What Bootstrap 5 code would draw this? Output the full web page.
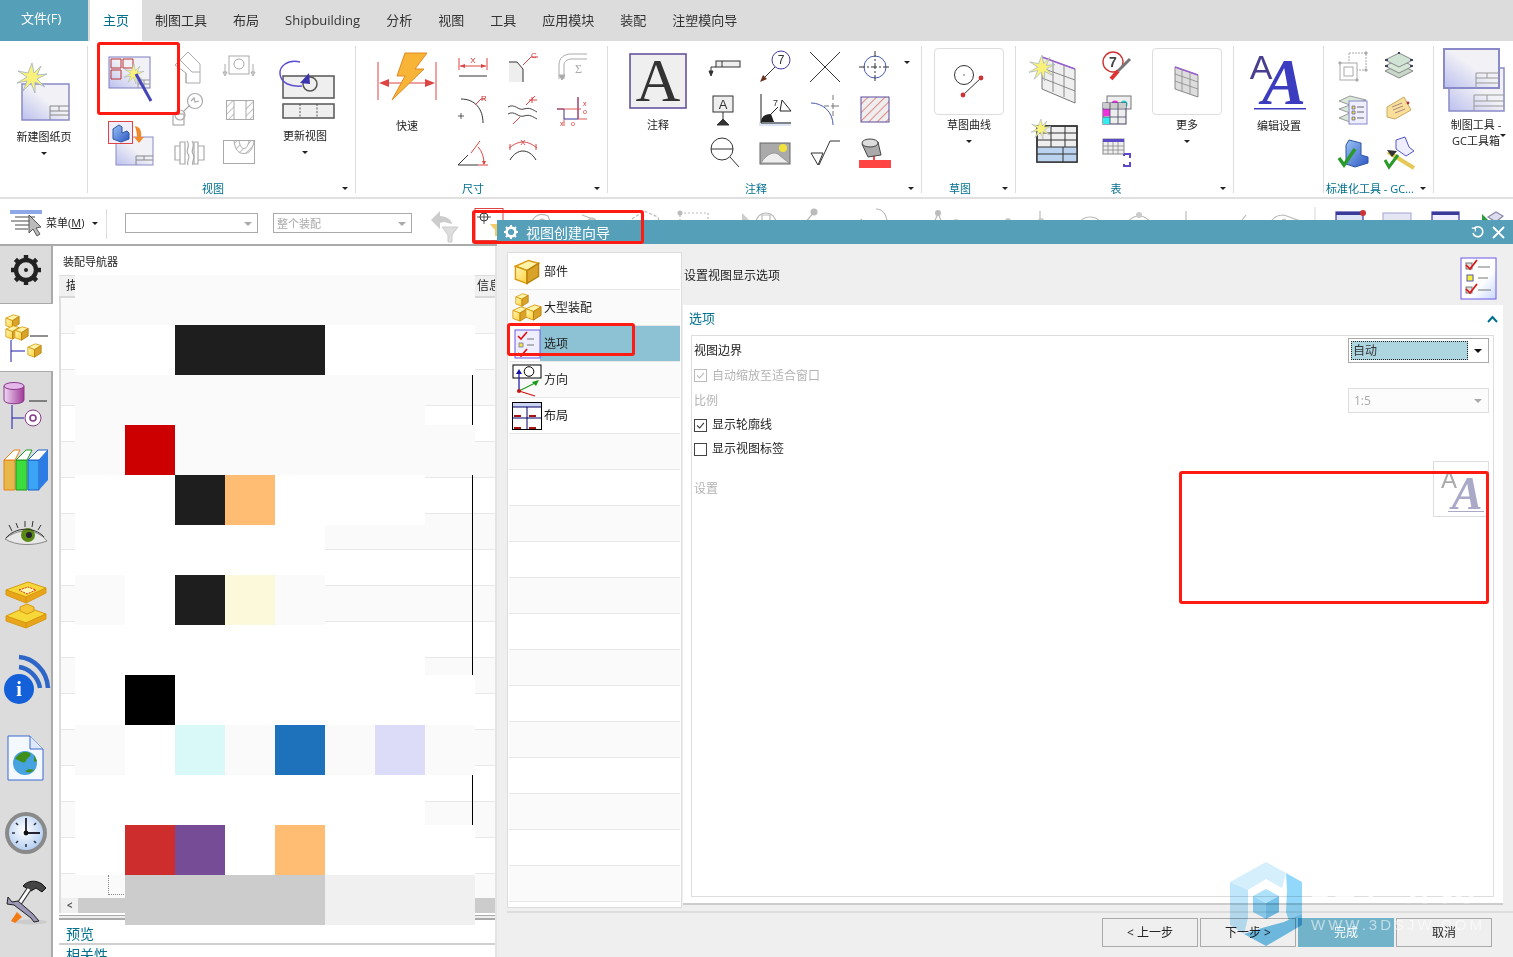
<!DOCTYPE html>
<html lang="zh-CN">

<head>
  <meta charset="UTF-8">
  <meta name="viewport" content="width=device-width, initial-scale=1.0">
  <title>视图创建向导</title>
  <link href="https://cdn.jsdelivr.net/npm/bootstrap@5.3.0/dist/css/bootstrap.min.css" rel="stylesheet">
  <style>
    html, body { height: 100%; overflow: hidden; }
    body {
      background: #fff;
      color: #222;
      font-family: "Open Sans", "Noto Sans CJK SC", sans-serif;
      font-size: 12px;
    }
    svg { display: block; flex: none; overflow: visible; }

    .app-root { position: relative; width: 1513px; height: 957px; overflow: hidden; }
    .main-row { min-height: 0; }

    /* small spacing helpers for the pixel values bootstrap has no step for */
    .mtx-2 { margin-top: 2px; } .mtx-6 { margin-top: 6px; } .mtx-7 { margin-top: 7px; } .mtx-10 { margin-top: 10px; }
    .mtx-11 { margin-top: 11px; } .mtx-15 { margin-top: 15px; } .mtx-16 { margin-top: 16px; } .mtx-18 { margin-top: 18px; }

    /* tabs */
    .tab-strip { height: 41px; background: #dcdcdc; }
    .tab-file { width: 88px; background: #559fb9; color: #fff; font-size: 13px; padding-left: 21px; line-height: 37px; margin-right: 2px; }
    .tab-item { padding: 0 13px; font-size: 13px; line-height: 41px; color: #333; }
    .tab-item.is-on { background: #fff; color: #00708f; }

    /* ribbon */
    .rb-bar { height: 158px; border-bottom: 2px solid #e0e0e0; }
    .rb-group { position: relative; }
    .rb-group::after { content: ""; position: absolute; right: 0; top: 5px; bottom: 4px; width: 1px; background: #ddd; }
    .g-88 { width: 88px; } .g-268 { width: 268px; } .g-252 { width: 252px; } .g-314 { width: 314px; }
    .g-94 { width: 94px; } .g-218 { width: 218px; } .g-90 { width: 90px; } .g-110 { width: 110px; }
    .rb-body { height: 139px; padding-top: 4px; }
    .rb-foot { height: 17px; color: #00708f; font-size: 11px; line-height: 17px; padding-right: 18px; position: relative; text-align: center; white-space: nowrap; }
    .rb-foot.is-left { text-align: left; padding-left: 2px; }
    .rb-foot .rb-arrow { position: absolute; right: 8px; top: 7px; }
    .rb-lbl { font-size: 11px; line-height: 15px; text-align: center; white-space: nowrap; }
    .rb-arrow { display: block; width: 0; height: 0; border-left: 3px solid transparent; border-right: 3px solid transparent; border-top: 3px solid #222; }
    .rb-small { display: grid; grid-template-rows: repeat(3, 43px); grid-auto-columns: 50px; grid-auto-flow: column; }
    .rb-small.is-46 { grid-auto-columns: 46px; }
    .rb-small > div { display: flex; align-items: center; justify-content: center; }
    .rb-big { display: flex; flex-direction: column; align-items: center; }
    .rb-box { width: 70px; height: 67px; border: 1px solid #ddd; border-radius: 4px; display: flex; align-items: center; justify-content: center; }
    .view-body { padding-left: 20px; }
    .view-col { width: 57px; }
    .upd-col { width: 80px; padding-top: 15px; }
    .quick-col { width: 92px; padding: 7px 0 0 10px; }
    .note-col { width: 92px; padding: 7px 0 0 8px; }
    .sketch-body { padding-top: 7px; }
    .sketch-col { width: 94px; }
    .tbl-col { width: 78px; padding-left: 19px; }
    .tbl-mid { margin-right: 12px; }
    .more-col { margin-top: 3px; }
    .edit-col { padding-top: 11px; }
    .std-body { padding-left: 6px; }
    .gc-col { padding: 7px 0 0 9px; }
    .gc-lbl { margin: 5px 0 0 -2px; width: 70px; line-height: 16px; }
    .gc-arrow { position: absolute; right: 7px; top: 93px; }

    /* toolbar */
    .tool-bar { height: 47px; border-bottom: 2px solid #aaa; padding-top: 10px; }
    .tool-menu { width: 106px; padding-left: 10px; }
    .tool-menu-text { font-size: 11px; white-space: nowrap; }
    .tool-sel { height: 20px; border: 1px solid #aaa; color: #aaa; font-size: 11px; padding: 0 3px; line-height: 19px; position: relative; margin-top: 4px; }
    .tool-sel.sel-a { width: 133px; margin-left: 18px; }
    .tool-sel.sel-b { width: 139px; margin-left: 15px; }
    .tool-sel::after, .cb-arrow { content: ""; display: block; width: 0; height: 0; border-left: 4px solid transparent; border-right: 4px solid transparent; border-top: 4px solid #aaa; }
    .tool-sel::after { position: absolute; right: 5px; top: 8px; }
    .tool-vr { width: 1px; height: 30px; background: #ddd; }
    .tool-cross { margin: -1px 0 0 12px; }
    .tool-grey { margin-left: 26px; }

    /* left rail */
    .rail-col { width: 53px; background: #dcdcdc; border-right: 2px solid #aaa; }
    .rail-top { height: 58px; border-bottom: 1px solid #aaa; padding-bottom: 10px; }
    .rail-on { height: 68px; background: #fff; margin-right: -2px; border-bottom: 1px solid #aaa; }
    .rail-slot { display: flex; align-items: center; justify-content: center; }
    .rh-66 { height: 66px; } .rh-63 { height: 63px; } .rh-73 { height: 73px; } .rh-79 { height: 79px; } .rh-78 { height: 78px; } .rh-72 { height: 72px; }

    /* navigator */
    .nav-pane { position: relative; width: 444px; padding: 8px 0 0 6px; overflow: hidden; border-right: 2px solid #e4e4e4; }
    .nav-title { font-size: 11px; line-height: 16px; padding-left: 4px; height: 21px; }
    .nav-head { height: 23px; background: #f0f0f0; border-bottom: 2px solid #d8d8d8; border-top: 1px solid #ddd; font-size: 12px; line-height: 20px; padding: 0 0 0 7px; }
    .nav-head-end { flex: none; width: 18px; white-space: nowrap; overflow: hidden; }
    .nav-rows { border-left: 2px solid #ddd; position: relative; }
    .nav-row { height: 36px; border-bottom: 1px solid #e8e8e8; }
    .nav-row.is-alt { background: #fafafa; }
    .nav-line { position: absolute; left: 411px; top: 40px; bottom: 0; width: 1px; background: #000; }
    .nav-tail { height: 24px; background: #fafafa; border-left: 2px solid #ddd; position: relative; }
    .nav-tail::after { content: ""; position: absolute; left: 47px; top: 1px; height: 20px; width: 16px; border-left: 1px dotted #888; border-bottom: 1px dotted #888; }
    .nav-scroll { height: 15px; border-left: 2px solid #ddd; background: #ccc; }
    .nav-scroll-btn { width: 17px; background: #f0f0f0; color: #555; font-size: 10px; line-height: 15px; text-align: center; font-weight: 700; }
    .nav-dbl { height: 5px; margin-top: 2px; border-top: 1px solid #aaa; border-bottom: 2px solid #aaa; background: #eee; }
    .nav-fold { color: #00708f; font-size: 14px; line-height: 20px; padding: 4px 0 0 7px; height: 25px; border-bottom: 2px solid #d0d0d0; }
    .nav-fold.is-last { border-bottom: 0; padding-top: 0; }

    /* mosaic over the navigator tree */
    .mosaic-grid { position: absolute; left: 22px; top: 29px; width: 400px; display: grid; grid-template-columns: repeat(8, 50px); grid-auto-rows: 50px; }

    /* dialog */
    .dlg-win { position: absolute; left: 497px; top: 220px; right: 0; bottom: 0; background: #efefef; }
    .dlg-title { height: 24px; background: #559fb9; color: #fff; font-size: 14px; padding: 0 8px 0 7px; }
    .dlg-body { padding: 8px 0 0 10px; }
    .dlg-list { width: 175px; height: 656px; background: #fff; border: 1px solid #ddd; padding: 1px 0 0 1px; overflow: hidden; }
    .dlg-row { height: 36px; border-bottom: 1px solid #e8e8e8; font-size: 12px; margin-right: 1px; padding-left: 3px; }
    .dlg-row.is-alt { background: #fafafa; }
    .dlg-row.is-sel { background: linear-gradient(to right, #fff 31px, #8cc2d4 31px); }
    .dlg-row svg { margin-right: 2px; }
    .dlg-right { width: 820px; margin-left: 1px; }
    .dlg-top { height: 53px; font-size: 12px; padding: 0 6px 6px 1px; }
    .dlg-top svg { margin-top: 6px; }
    .dlg-sec { height: 600px; background: #fff; border-bottom: 2px solid #ccc; }
    .dlg-sec-head { height: 30px; padding: 0 5px 3px 6px; color: #00708f; font-size: 13px; }
    .dlg-inner { height: 562px; margin: 0 9px 0 8px; border: 1px solid #ddd; padding: 2px 4px 0 2px; font-size: 12px; }
    .opt-row { height: 25px; }
    .opt-row.is-sm { height: 24px; }
    .opt-off { color: #b4b4b4; }
    .cb-box { width: 141px; height: 25px; border: 1px solid #aaa; padding: 2px 6px 2px 2px; }
    .cb-box.is-off { border-color: #ddd; color: #aaa; background: #fcfcfc; padding-left: 5px; }
    .cb-text { flex: 1; height: 19px; line-height: 17px; background: #add6e1; border: 1px dotted #222; padding-left: 1px; margin-right: 6px; color: #333; }
    .cb-arrow.is-dark { border-top-color: #111; }
    .form-check-input.opt-check {
      width: 13px; height: 13px; margin: 0 5px 0 0; flex: none; border-radius: 0; border: 1px solid #444; background-color: #fff; opacity: 1;
    }
    .form-check-input.opt-check:checked {
      background-color: #fff; border-color: #444;
      background-image: url("data:image/svg+xml,%3Csvg xmlns='http://www.w3.org/2000/svg' viewBox='0 0 13 13'%3E%3Cpath d='M2.5 6.5l3 3 5-6' fill='none' stroke='%23333' stroke-width='1.3'/%3E%3C/svg%3E");
    }
    .form-check-input.opt-check:disabled { border-color: #bbb; }
    .form-check-input.opt-check:disabled:checked {
      background-image: url("data:image/svg+xml,%3Csvg xmlns='http://www.w3.org/2000/svg' viewBox='0 0 13 13'%3E%3Cpath d='M2.5 6.5l3 3 5-6' fill='none' stroke='%23bbb' stroke-width='1.3'/%3E%3C/svg%3E");
    }
    .opt-aa { width: 56px; height: 56px; border: 1px solid #ddd; }
    .dlg-rule { margin: 3px 0 0 10px; border-top: 2px solid #ddd; }
    .dlg-foot { padding: 5px 21px 0 0; gap: 2px; }
    .btn.dlg-btn { width: 96px; height: 29px; padding: 0; border: 1px solid #aaa; border-radius: 0; font-size: 12px; background: #efefef; color: #222; }
    .btn.dlg-btn.is-main { background: #73b3c9; border-color: #73b3c9; color: #fff; }

    /* overlays */
    .mark-red { position: absolute; border: 3px solid #ff1a12; border-radius: 3px; }
    .mark-a { left: 97px; top: 42px; width: 83px; height: 73px; }
    .mark-b { left: 472px; top: 210px; width: 172px; height: 34px; }
    .mark-c { left: 507px; top: 323px; width: 128px; height: 33px; }
    .mark-d { left: 1179px; top: 471px; width: 310px; height: 133px; }
    .wm-hex { position: absolute; left: 1230px; top: 862px; mix-blend-mode: multiply; }
    .wm-big { position: absolute; left: 1310px; top: 868px; font: 700 36px/40px "Liberation Sans", "Noto Sans CJK SC", sans-serif; color: rgba(255, 255, 255, .78); letter-spacing: 3px; white-space: nowrap; }
    .wm-url { position: absolute; left: 1311px; top: 916px; font: 15px/18px "Liberation Sans", sans-serif; letter-spacing: 3px; color: rgba(255, 255, 255, .55); white-space: nowrap; }
  </style>
</head>

<body>
  <svg width="0" height="0" class="position-absolute">
    <defs>
      <linearGradient id="gSheet" x1="1" y1="0" x2="0" y2="1"><stop offset=".45" stop-color="#f2f2f6"/><stop offset="1" stop-color="#bcc0ee"/></linearGradient>
      <linearGradient id="gCube" x1="0" y1="0" x2="1" y2="1"><stop offset="0" stop-color="#fff6b8"/><stop offset="1" stop-color="#ffd23c"/></linearGradient>
      <linearGradient id="gBlue" x1="0" y1="0" x2="1" y2="1"><stop offset="0" stop-color="#9cc4f4"/><stop offset="1" stop-color="#2c56c4"/></linearGradient>
      <linearGradient id="gCyl" x1="0" y1="0" x2="1" y2="0"><stop offset="0" stop-color="#f0d8f6"/><stop offset="1" stop-color="#a03a98"/></linearGradient>
      <linearGradient id="gList" x1="0" y1="0" x2="1" y2="1"><stop offset=".6" stop-color="#fff"/><stop offset="1" stop-color="#c8d8ff"/></linearGradient>
      <radialGradient id="gClock" cx=".45" cy=".4" r=".7"><stop offset="0" stop-color="#fff"/><stop offset="1" stop-color="#a9c8ef"/></radialGradient>
      <pattern id="pHatch" width="5" height="5" patternUnits="userSpaceOnUse" patternTransform="rotate(45)"><line x1="0" y1="0" x2="0" y2="5" stroke="#aaa" stroke-width="1.4"/></pattern>
      <pattern id="pRed" width="6" height="6" patternUnits="userSpaceOnUse" patternTransform="rotate(45)"><rect width="6" height="6" fill="#eee"/><line x1="0" y1="0" x2="0" y2="6" stroke="#d44" stroke-width="1.2"/></pattern>
      <symbol id="sStar" viewBox="0 0 30 30"><polygon points="15,0 17,10 24,3 20,12 30,11 20,16 28,24 18,19 18,30 14,20 6,28 10,18 0,20 10,14 1,8 11,10" fill="#f9f17a" stroke="#9fb0c4" stroke-width=".8"/></symbol>
      <symbol id="sCube" viewBox="1 1 18 18"><polygon points="2,6 11,2 18,4 10,9" fill="#fff3a8" stroke="#d99a10"/><polygon points="2,6 10,9 10,18 2,15" fill="url(#gCube)" stroke="#d99a10"/><polygon points="10,9 18,4 18,13 10,18" fill="#d9a32a" stroke="#b9820c"/></symbol>
    </defs>
  </svg>

  <div class="app-root d-flex flex-column">
    <div class="tab-strip d-flex flex-shrink-0">
      <div class="tab-file">文件(F)</div>
      <div class="tab-item is-on">主页</div>
      <div class="tab-item">制图工具</div>
      <div class="tab-item">布局</div>
      <div class="tab-item">Shipbuilding</div>
      <div class="tab-item">分析</div>
      <div class="tab-item">视图</div>
      <div class="tab-item">工具</div>
      <div class="tab-item">应用模块</div>
      <div class="tab-item">装配</div>
      <div class="tab-item">注塑模向导</div>
    </div>

    <div class="rb-bar d-flex flex-shrink-0">
      <!-- new sheet -->
      <div class="rb-group g-88">
        <div class="rb-big pt-3">
          <svg width="60" height="66" viewBox="0 0 60 66"><rect x="8" y="27" width="47" height="36" fill="url(#gSheet)" stroke="#8a8ac8" stroke-width="1.5"/><path d="M36 63V49h19M36 54h19M36 58h19M45 49v5" fill="none" stroke="#888"/><use href="#sStar" x="3" y="6" width="30" height="30"/></svg>
          <div class="rb-lbl mtx-6">新建图纸页</div>
          <span class="rb-arrow mt-2"></span>
        </div>
      </div>

      <!-- view -->
      <div class="rb-group g-268">
        <div class="rb-body view-body d-flex">
          <div class="view-col">
            <svg class="mtx-11" width="48" height="50" viewBox="0 0 48 50"><rect x="1" y="1" width="41" height="31" fill="url(#gSheet)" stroke="#7d7dc0"/><path d="M3 3h10v9H3zM15 3h10v9H15zM3 14h10v9H3z" fill="none" stroke="#b33"/><path d="M30 32V24h12M30 28h12M36 24v8" stroke="#999" fill="none"/><use href="#sStar" x="16" y="8" width="20" height="20"/><line x1="28" y1="18" x2="43" y2="45" stroke="#4444bb" stroke-width="3"/></svg>
            <svg class="mtx-15" width="48" height="46" viewBox="0 0 48 46"><rect x="8" y="16" width="37" height="28" fill="url(#gSheet)" stroke="#8a8ac8"/><path d="M28 44V35h17M28 39h17M36 35v4" stroke="#888" fill="none"/><rect x="0.5" y="0.5" width="24" height="22" fill="#eef" stroke="#d44"/><path d="M5 8l6-4 3 2v6l5-2 2 2v6l-8 3-8-3z" fill="url(#gBlue)" stroke="#2c56a4"/><path d="M27 5c5 1 7 5 6 11h3l-5 6-5-6h3c0-4-1-7-2-11z" fill="#f28a2c"/></svg>
          </div>
          <div class="rb-small">
            <div><svg width="36" height="36" viewBox="0 0 36 36" fill="#fff" stroke="#aaa"><path d="M3 16L16 3l12 12v19H14V24z"/><path d="M8 11l12 12H28M16 3l-6 6M14 24v10" fill="none"/></svg></div>
            <div><svg width="36" height="36" viewBox="0 0 36 36" fill="none" stroke="#aaa" stroke-width="1.2"><rect x="1" y="22" width="11" height="11"/><circle cx="8" cy="23" r="5"/><circle cx="23" cy="9" r="7.5"/><path d="M12 19l6-6M19 9l3-3 1 4 4-1"/></svg></div>
            <div><svg width="32" height="30" viewBox="0 0 32 30" fill="none" stroke="#aaa" stroke-width="1.2"><path d="M1 8h5v14H1zM6 4h5v22H6zM24 8h6v14h-6zM20 4h4v22h-4z"/><path d="M13 3c4 5-2 9 1 13s-2 7 0 11M18 3c4 5-2 9 1 13s-2 7 0 11"/></svg></div>
            <div><svg width="34" height="30" viewBox="0 0 34 30" fill="none" stroke="#aaa"><rect x="6" y="4" width="20" height="18"/><circle cx="16" cy="12" r="5"/><path d="M2 12v10M30 12v10M0 20l2 4 2-4zM28 20l2 4 2-4z"/></svg></div>
            <div><svg width="28" height="20" viewBox="0 0 28 20" stroke="#aaa"><rect x=".5" y=".5" width="27" height="19" fill="url(#pHatch)"/><rect x="8" y=".5" width="12" height="19" fill="#fff"/></svg></div>
            <div><svg width="34" height="26" viewBox="0 0 34 26" stroke="#aaa"><rect x=".5" y=".5" width="31" height="23" fill="#fff"/><path d="M11 .5c1 10 5 13 10 13s9-4 10-13z" fill="url(#pHatch)"/><path d="M16 .5c1 6 3 8 5 8s4-2 5-8z" fill="#fff"/></svg></div>
          </div>
          <div class="rb-big upd-col">
            <svg width="60" height="62" viewBox="0 0 60 62"><rect x="8" y="16" width="51" height="22" fill="#efefef" stroke="#555" stroke-width="1.5"/><circle cx="35" cy="24" r="7" fill="none" stroke="#555" stroke-width="1.5"/><path d="M25 2C12-1 4 7 5 14c1 9 10 13 22 12" fill="none" stroke="#5a4fd0" stroke-width="1.5"/><path d="M25 23l9-10 1 11z" fill="#3b36b0"/><rect x="8" y="44" width="51" height="14" fill="#efefef" stroke="#555" stroke-width="1.5"/><path d="M25 44v14M42 44v14" stroke="#555" stroke-dasharray="2 1.5"/></svg>
            <div class="rb-lbl mtx-6">更新视图</div>
            <span class="rb-arrow mt-2"></span>
          </div>
        </div>
        <div class="rb-foot">视图<span class="rb-arrow"></span></div>
      </div>

      <!-- dimension -->
      <div class="rb-group g-252">
        <div class="rb-body d-flex">
          <div class="rb-big quick-col">
            <svg width="60" height="50" viewBox="0 0 60 50"><path d="M1 10v38M59 10v38" stroke="#d44"/><path d="M2 31l10-4v8zM58 31l-10-4v8z" fill="#d44"/><path d="M12 31h36" stroke="#d44"/><polygon points="28,1 50,1 38,17 47,17 15,48 28,24 20,24" fill="#f7b437" stroke="#e08a20"/></svg>
            <div class="rb-lbl mtx-16">快速</div>
          </div>
          <div class="rb-small">
            <div><svg width="32" height="26" viewBox="0 0 32 26" fill="none"><path d="M2 4v12M30 4v12M3 12h26" stroke="#d44"/><path d="M8 10l-5 2 5 2zM24 10l5 2-5 2z" fill="#d44"/><path d="M2 22h28" stroke="#333"/><text x="16" y="9" text-anchor="middle" font-size="8" font-family="Liberation Sans" fill="#c33">X</text></svg></div>
            <div><svg width="32" height="32" viewBox="0 0 32 32" fill="none"><path d="M4 5c14 0 22 10 22 24" stroke="#333"/><path d="M1 22h6M4 19v6" stroke="#333" stroke-width=".8"/><path d="M18 11l6-6h4" stroke="#d44"/><text x="24" y="7" font-size="8" font-family="Liberation Sans" fill="#c33">R</text></svg></div>
            <div><svg width="32" height="30" viewBox="0 0 32 30" fill="none"><path d="M1 27l10-10M1 27h20" stroke="#333"/><path d="M14 15L23 3" stroke="#d44"/><path d="M21 9c4 4 6 10 6 17M21 27h10" stroke="#d44"/><path d="M25 23l2 4 2-4z" fill="#d44"/></svg></div>
            <div><svg width="32" height="32" viewBox="0 0 32 32" fill="none"><path d="M2 11h8l6 7v13H2z" fill="#eee" stroke="none"/><path d="M2 11h8l6 7v13" stroke="#333"/><path d="M16 14l8-8h7" stroke="#d44"/><text x="24" y="7" font-size="8" font-family="Liberation Sans" fill="#c33">C</text></svg></div>
            <div><svg width="32" height="30" viewBox="0 0 32 30" fill="none"><path d="M1 12c7-4 10 4 16 2s9 1 13 3M1 19c7-4 10 4 16 2s9 1 13 3" stroke="#444"/><path d="M19 10l9-9M22 5h8M25 2v6M6 29l7-7" stroke="#d44"/></svg></div>
            <div><svg width="32" height="30" viewBox="0 0 32 30" fill="none"><path d="M2 10c10-8 18-8 28 0M3 6v6M29 6v6" stroke="#d44"/><path d="M3 22c7-12 19-12 26 0" stroke="#333"/><text x="16" y="7" text-anchor="middle" font-size="8" font-family="Liberation Sans" fill="#c33">X</text></svg></div>
            <div><svg width="32" height="32" viewBox="0 0 32 32" fill="none" stroke="#aaa"><path d="M2 28V14C2 7 7 3 14 3h16M7 28V14c0-3 3-6 7-6h16"/><path d="M5 29l-3-5h6z" fill="#aaa"/><text x="18" y="22" font-size="12" font-family="Liberation Serif" fill="#aaa" stroke="none">Σ</text></svg></div>
            <div><svg width="34" height="32" viewBox="0 0 34 32" fill="none"><path d="M1 15h7v10h14V3" stroke="#339"/><path d="M1 15h24M8 25v7M22 3v22h9" stroke="#d44" stroke-width=".9"/><text x="27" y="12" font-size="7" font-family="Liberation Sans" fill="#c33">x</text><text x="27" y="20" font-size="7" font-family="Liberation Sans" fill="#c33">o</text><text x="4" y="32" font-size="7" font-family="Liberation Sans" fill="#c33">x</text><text x="15" y="32" font-size="7" font-family="Liberation Sans" fill="#c33">o</text></svg></div>
            <div></div>
          </div>
        </div>
        <div class="rb-foot">尺寸<span class="rb-arrow"></span></div>
      </div>

      <!-- annotation -->
      <div class="rb-group g-314">
        <div class="rb-body d-flex">
          <div class="rb-big note-col">
            <svg width="60" height="58" viewBox="0 0 60 58"><rect x="2" y="2" width="56" height="54" fill="#efefef" stroke="#5b4a9a" stroke-width="1.5"/><text x="30" y="49" text-anchor="middle" font-size="62" font-family="Liberation Serif" fill="#333">A</text></svg>
            <div class="rb-lbl mtx-7">注释</div>
          </div>
          <div class="rb-small">
            <div><svg width="32" height="24" viewBox="0 0 32 24" fill="none" stroke="#333"><rect x="7" y="6" width="24" height="6" fill="#eee"/><path d="M13 6v6M7 12H2v6"/><path d="M0 16l2 5 2-5z" fill="#333"/></svg></div>
            <div><svg width="32" height="34" viewBox="0 0 32 34" fill="none" stroke="#333"><rect x="4" y="3" width="20" height="16" fill="#eee" stroke="#333"/><text x="14" y="16" text-anchor="middle" font-size="13" font-family="Liberation Sans" fill="#333" stroke="none">A</text><path d="M14 19v8"/><path d="M8 32l6-6 6 6z" fill="#333"/></svg></div>
            <div><svg width="32" height="32" viewBox="0 0 32 32" fill="none" stroke="#333"><circle cx="13" cy="12" r="11"/><path d="M2 12h22M21 20l9 10"/></svg></div>
            <div><svg width="34" height="34" viewBox="0 0 34 34" fill="none"><circle cx="23" cy="10" r="9" fill="#fff" stroke="#4538a8"/><text x="23" y="14" text-anchor="middle" font-size="12" font-family="Liberation Sans" fill="#333">7</text><path d="M17 17L3 31" stroke="#333"/><path d="M2 32l3-7 4 4z" fill="#632"/></svg></div>
            <div><svg width="34" height="34" viewBox="0 0 34 34" fill="none"><rect x="1" y="29" width="32" height="4" fill="#dde4f5"/><path d="M3 1v29h30" stroke="#222"/><path d="M3 29c0-5 4-8 10-8l3 8z" fill="#222"/><path d="M10 24L20 14" stroke="#222"/><path d="M22 18h11L24 7z" stroke="#222"/><text x="15" y="13" font-size="9" font-family="Liberation Sans" fill="#333">7</text></svg></div>
            <div><svg width="34" height="30" viewBox="0 0 34 30"><rect x="2" y="5" width="30" height="21" fill="#aaa" stroke="#666"/><circle cx="25" cy="10" r="4" fill="#f2e23c"/><path d="M3 25c6-10 14-12 18-8l10 8z" fill="#eee" stroke="#999"/></svg></div>
            <div><svg width="32" height="32" viewBox="0 0 32 32" fill="none"><path d="M1 1l30 30M31 1L1 31" stroke="#333"/></svg></div>
            <div><svg width="32" height="32" viewBox="0 0 32 32" fill="none"><path d="M2 9c12 0 22 9 22 22" stroke="#4a5cb0"/><path d="M24 1v5M24 9v6M15 12h5M22 12h8M24 17v5" stroke="#777"/></svg></div>
            <div><svg width="30" height="28" viewBox="0 0 30 28" fill="none" stroke="#333"><path d="M1 14h12l-5 12zM9 26L20 2h10"/></svg></div>
            <div><svg width="34" height="34" viewBox="0 0 34 34" fill="none" stroke="#333"><circle cx="17" cy="17" r="11" stroke="#4a5cb0"/><path d="M17 1v32M1 17h32" stroke-dasharray="6 2 2 2"/></svg></div>
            <div><svg width="30" height="28" viewBox="0 0 30 28"><rect x="1" y="1" width="28" height="25" fill="url(#pRed)" stroke="#5b4a9a"/></svg></div>
            <div><svg width="32" height="32" viewBox="0 0 32 32"><rect x="0" y="23" width="32" height="8" fill="#f44"/><rect x="14" y="16" width="2" height="8" fill="#f44"/><path d="M3 7l16-2 3 13-13 2z" fill="#aaa" stroke="#444"/><ellipse cx="11" cy="6" rx="8" ry="4" fill="#ddd" stroke="#444"/></svg></div>
          </div>
          <div class="ms-1 pt-3"><span class="rb-arrow"></span></div>
        </div>
        <div class="rb-foot">注释<span class="rb-arrow"></span></div>
      </div>

      <!-- sketch -->
      <div class="rb-group g-94">
        <div class="rb-body sketch-body">
          <div class="rb-big sketch-col">
            <div class="rb-box"><svg width="32" height="34" viewBox="0 0 32 34" fill="none"><circle cx="11" cy="10" r="9.5" stroke="#333"/><circle cx="11" cy="10" r=".7" fill="#333"/><path d="M10 30L28 13" stroke="#333"/><circle cx="10" cy="30" r="2.4" fill="#c33"/><circle cx="28" cy="13" r="2.4" fill="#c33"/></svg></div>
            <div class="rb-lbl mtx-2">草图曲线</div>
            <span class="rb-arrow mt-2"></span>
          </div>
        </div>
        <div class="rb-foot">草图<span class="rb-arrow"></span></div>
      </div>

      <!-- table -->
      <div class="rb-group g-218">
        <div class="rb-body d-flex">
          <div class="tbl-col">
            <svg class="mtx-10" width="50" height="50" viewBox="6 0 50 50"><polygon points="13,2 46,14 46,48 13,34" fill="#efefef" stroke="#777"/><path d="M13 2l33 12" stroke="#9a5fd0" stroke-width="1.5"/><path d="M13 13l33 12M13 23l33 13M24 6v31M35 10v32" stroke="#888"/><use href="#sStar" x="0" y="0" width="26" height="26"/></svg>
            <svg class="mtx-16" width="46" height="42" viewBox="4 2 46 42"><rect x="6" y="7" width="40" height="36" fill="#efefef" stroke="#333" stroke-width="1.4"/><rect x="6" y="28" width="40" height="15" fill="#bcd3ef"/><path d="M6 14h40M6 21h40M6 28h40M6 35h40M20 7v21M34 7v21M32 28v15" stroke="#333"/><rect x="6" y="7" width="40" height="36" fill="none" stroke="#333" stroke-width="1.4"/><use href="#sStar" x="0" y="0" width="20" height="20"/></svg>
          </div>
          <div class="rb-small is-46 tbl-mid">
            <div><svg width="30" height="32" viewBox="0 0 30 32"><circle cx="11" cy="11" r="10" fill="#fff" stroke="#c33" stroke-width="1.4"/><text x="11" y="16" text-anchor="middle" font-size="14" font-weight="700" font-family="Liberation Sans" fill="#444">7</text><path d="M28 8l-12 12" stroke="#777" stroke-width="3"/><path d="M16 20l-7 8" stroke="#d33" stroke-width="4"/></svg></div>
            <div><svg width="30" height="30" viewBox="0 0 30 30"><rect x="5" y="1" width="24" height="13" fill="#eee" stroke="#777"/><circle cx="13" cy="9" r="3.5" fill="#e3d"/><circle cx="22" cy="9" r="3.5" fill="#3cc"/><rect x="1" y="8" width="23" height="21" fill="#eee" stroke="#446"/><rect x="1" y="8" width="23" height="5" fill="#ccc"/><rect x="1" y="14" width="7" height="7" fill="#e3d"/><rect x="1" y="22" width="7" height="7" fill="#3ee"/><path d="M8 8v21M16 8v21M1 14h23M1 22h23" stroke="#446" stroke-width=".8"/></svg></div>
            <div><svg width="30" height="30" viewBox="0 0 30 30"><rect x="1" y="1" width="21" height="15" fill="#eee" stroke="#888"/><rect x="1" y="1" width="21" height="3" fill="#5b4ac8"/><path d="M1 8h21M1 12h21M6 4v12M11 4v12M16 4v12" stroke="#888" stroke-width=".8"/><path d="M22 16h6v4M28 24v4h-6M22 26v3M22 16v2" fill="none" stroke="#5b4ac8" stroke-width="2"/></svg></div>
          </div>
          <div class="rb-big more-col">
            <div class="rb-box"><svg width="26" height="32" viewBox="0 0 26 32"><polygon points="1,1 24,9 24,31 1,23" fill="#ddd" stroke="#888"/><path d="M1 1l23 8" stroke="#9a5fd0" stroke-width="1.4"/><path d="M1 8l23 8M1 15l23 8M8 3v22M16 6v22" stroke="#888" stroke-width=".8"/></svg></div>
            <div class="rb-lbl mtx-2">更多</div>
            <span class="rb-arrow mt-2"></span>
          </div>
        </div>
        <div class="rb-foot">表<span class="rb-arrow"></span></div>
      </div>

      <!-- edit settings -->
      <div class="rb-group g-90">
        <div class="rb-big edit-col">
          <svg width="60" height="60" viewBox="0 0 60 60"><text x="12" y="27" text-anchor="middle" font-size="34" font-family="Liberation Sans" fill="#4a3f8f">A</text><text x="35" y="52" text-anchor="middle" font-size="66" font-weight="700" font-style="italic" font-family="Liberation Serif" fill="#3c3cc0">A</text><rect x="5" y="56" width="52" height="1.5" fill="#3c3cc0"/></svg>
          <div class="rb-lbl mtx-6">编辑设置</div>
        </div>
      </div>

      <!-- standardize -->
      <div class="rb-group g-110">
        <div class="rb-body std-body d-flex">
          <div class="rb-small is-46">
            <div><svg width="32" height="32" viewBox="0 0 32 32" fill="#fff" stroke="#aaa"><rect x="12" y="2" width="17" height="17" stroke-dasharray="2 1"/><rect x="3" y="12" width="17" height="17"/><rect x="7" y="16" width="9" height="9"/><path d="M2 11h2v2H2zM19 28h2v2h-2zM28 1h2v2h-2zM28 18h2v2h-2z" fill="#aaa"/></svg></div>
            <div><svg width="30" height="30" viewBox="0 0 30 30"><polygon points="12,1 28,5 12,10 1,6" fill="#d8e8d8" stroke="#999"/><polygon points="12,10 24,14 12,18 1,14" fill="#d8e8d8" stroke="#999"/><polygon points="12,18 24,22 12,27 1,23" fill="#d8e8d8" stroke="#999"/><rect x="11" y="6" width="18" height="23" fill="#eef" stroke="#88c"/><path d="M14 11h3v3h-3zM14 16h3v3h-3zM14 22h3v3h-3z" fill="#f2e23c" stroke="#55a" stroke-width=".7"/><path d="M19 12h7M19 17h7M19 23h7" stroke="#666"/></svg></div>
            <div><svg width="32" height="30" viewBox="0 0 32 30"><path d="M12 2l12 3v12l7 2v6l-13 4-9-3V7z" fill="url(#gBlue)" stroke="#2c56a4"/><path d="M2 20l5 7 11-16" fill="none" stroke="#2a9a2a" stroke-width="3.5"/></svg></div>
            <div><svg width="30" height="32" viewBox="0 0 30 32"><polygon points="15,13 29,20 15,27 1,20" fill="#c8d8c8" stroke="#888"/><polygon points="15,8 29,15 15,22 1,15" fill="#d8e8d8" stroke="#888"/><polygon points="15,2 29,9 15,16 1,9" fill="#cfe4d4" stroke="#888"/><path d="M15 1v2M1 9h3M26 9h3M1 15h3M26 15h3" stroke="#446" stroke-width="2"/></svg></div>
            <div><svg width="30" height="30" viewBox="0 0 30 30"><path d="M3 12L20 2l7 13-16 9-8-2z" fill="#fadf9a" stroke="#c8aa60"/><path d="M8 12l10-4M9 15l10-4M11 18l10-4" stroke="#a88"/><circle cx="24" cy="8" r="1.4" fill="#a33"/></svg></div>
            <div><svg width="32" height="34" viewBox="0 0 32 34"><path d="M13 4l9-3 4 10 5 4-8 5-10-7z" fill="#eef" stroke="#55c"/><path d="M5 16l26 16" stroke="#e4c85a" stroke-width="4"/><path d="M4 14l10 1-5 6z" fill="#333"/><path d="M2 24l4 7 9-12" fill="none" stroke="#2a9a2a" stroke-width="3"/></svg></div>
          </div>
        </div>
        <div class="rb-foot is-left">标准化工具 - GC...<span class="rb-arrow"></span></div>
      </div>

      <!-- drafting tool -->
      <div class="flex-grow-1 position-relative gc-col">
        <svg width="64" height="64" viewBox="0 0 64 64"><rect x="6" y="20" width="55" height="43" fill="url(#gSheet)" stroke="#8a8ac8" stroke-width="1.5"/><path d="M31 63V47h30M31 53h30M31 58h30M44 47v6" stroke="#999" fill="none"/><rect x="1" y="1" width="55" height="39" fill="url(#gSheet)" stroke="#8a8ac8" stroke-width="2"/><path d="M33 40V25h23M33 30h23M33 35h23M44 25v5" stroke="#999" fill="none"/></svg>
        <div class="rb-lbl gc-lbl">制图工具 -<br>GC工具箱</div>
        <span class="rb-arrow gc-arrow"></span>
      </div>
    </div>

    <div class="tool-bar d-flex align-items-start flex-shrink-0">
      <div class="tool-menu d-flex align-items-center">
        <svg width="32" height="28" viewBox="0 0 32 28"><rect x="0" y="1" width="32" height="4" fill="#8ca8e8"/><path d="M5 8h20M1 12h18M5 16h14M5 20h13" stroke="#888" stroke-width="1.4"/><path d="M19 6v18l4-4 4 7 3-2-4-6 5-1z" fill="#bbb" stroke="#555"/></svg>
        <span class="ms-1 tool-menu-text">菜单(<u>M</u>)</span>
        <span class="rb-arrow ms-2"></span>
      </div>
      <div class="tool-vr"></div>
      <div class="tool-sel sel-a"></div>
      <div class="tool-sel sel-b">整个装配</div>
      <svg class="ms-3" width="32" height="34" viewBox="0 0 32 34"><path d="M3 11l9-9v5c6 0 12 4 12 8l-8-2-4 1v6z" fill="#ccc"/><path d="M14 18h16l-6 8v7h-4v-7z" fill="#ddd" stroke="#ccc"/></svg>
      <svg class="tool-cross" width="32" height="34" viewBox="0 0 32 34"><rect x="3" y=".5" width="28" height="32" fill="#fff" stroke="#d44"/><circle cx="12" cy="9" r="4" fill="none" stroke="#333"/><path d="M12 2v14M5 9h14" stroke="#333" stroke-width=".8"/><path d="M18 16h14l-4 6v6h-5v-6z" fill="#f0cc6a"/></svg>
      <!-- greyed selection tools and the coloured group, mostly behind the dialog -->
      <svg class="tool-grey" width="983" height="24" viewBox="0 0 983 24" fill="none" stroke="#bbb" stroke-width="1.2">
        <path d="M2 12C6 5 12 4 18 7l2 5"/><circle cx="12" cy="13" r="3" fill="#ccc"/>
        <path d="M52 6l8 3 4 6"/><circle cx="62" cy="13" r="4" fill="#ccc"/>
        <path d="M102 10l12-8 14 6 3 12H104z" stroke-dasharray="3 2"/>
        <rect x="150" y="4" width="28" height="16" stroke-dasharray="2 2"/><circle cx="150" cy="4" r="2.5" fill="#bbb" stroke="none"/>
        <path d="M212 4l8 8-8 8z" fill="#ccc" stroke="none"/><circle cx="236" cy="14" r="10"/><path d="M232 6h8v6l-4 4-4-4z"/>
        <circle cx="284" cy="3" r="3.5" fill="#bbb" stroke="none"/><path d="M284 3l-14 17"/>
        <path d="M320 22l12-12"/><path d="M346 0c7 0 11 6 11 14v10"/>
        <circle cx="408" cy="4" r="3" fill="#bbb" stroke="none"/><path d="M408 4l-7 18M408 4l7 18"/><circle cx="426" cy="13" r="3" fill="#ccc" stroke="none"/>
        <circle cx="460" cy="14" r="3" fill="#ccc" stroke="none"/><circle cx="478" cy="12" r="3" fill="#ccc" stroke="none"/>
        <path d="M510 2v22M500 12h20"/><circle cx="511" cy="12" r="3" fill="#ccc" stroke="none"/>
        <circle cx="560" cy="22" r="14"/><path d="M560 16v4"/>
        <circle cx="609" cy="20" r="13"/><circle cx="609" cy="6" r="3" fill="#ccc" stroke="none"/>
        <path d="M656 2v22M716 6l-14 18"/>
        <path d="M740 20c0-10 6-14 14-14l16 6-20 12z"/><circle cx="754" cy="12" r="2.5" fill="#ccc" stroke="none"/>
        <path d="M785 -2v26" stroke="#ddd"/>
        <rect x="806" y="3" width="27" height="22" fill="#dde4f5" stroke="#3a3a9a"/><rect x="806" y="3" width="27" height="3" fill="#3a3a9a" stroke="none"/><circle cx="833" cy="4" r="3" fill="#c33" stroke="none"/>
        <rect x="853" y="4" width="28" height="20" fill="#e4e6f4" stroke="#b0b0d8"/>
        <rect x="902" y="3" width="27" height="22" fill="#eef" stroke="#3a3a9a"/><rect x="902" y="3" width="27" height="3" fill="#3a3a9a" stroke="none"/><path d="M910 12h4M918 12h4" stroke="#c33" stroke-width="2"/>
        <path d="M952 5v18l9-9z" fill="#2a9a3a" stroke="none"/><path d="M958 8l8-5 7 4-7 6z" fill="#dde" stroke="#88a"/>
      </svg>
    </div>

    <div class="main-row d-flex flex-grow-1">
      <div class="rail-col flex-shrink-0">
        <div class="rail-top rail-slot"><svg width="30" height="30" viewBox="0 0 30 30"><circle cx="15" cy="15" r="10" fill="none" stroke="#222" stroke-width="4.4"/><circle cx="15" cy="15" r="2" fill="#222"/><path d="M15 0v6M15 24v6M0 15h6M24 15h6M4.4 4.4l4 4M21.6 21.6l4 4M25.6 4.4l-4 4M8.4 21.6l-4 4" stroke="#222" stroke-width="4.4"/></svg></div>
        <div class="rail-on rail-slot"><svg width="46" height="48" viewBox="0 0 46 48"><use href="#sCube" x="1" y="0" width="15" height="15"/><use href="#sCube" x="1" y="11" width="15" height="15"/><use href="#sCube" x="10" y="12" width="15" height="15"/><use href="#sCube" x="23" y="29" width="15" height="15"/><path d="M26 22h18" stroke="#222"/><path d="M7 26v22M7 37h14" stroke="#1a1aa8"/></svg></div>
        <div class="rail-slot rh-66"><svg width="46" height="50" viewBox="0 0 46 50"><path d="M1 6v14c0 5 20 5 20 0V6z" fill="url(#gCyl)" stroke="#8a3a8a"/><ellipse cx="11" cy="6" rx="10" ry="3.5" fill="#e4b8e8" stroke="#8a3a8a"/><path d="M26 21h18" stroke="#222"/><path d="M9 25v24M9 38h12" stroke="#1a1aa8"/><circle cx="30" cy="38" r="8" fill="#fff" stroke="#8a3a8a"/><circle cx="30" cy="38" r="3" fill="none" stroke="#8a3a8a" stroke-width="1.6"/></svg></div>
        <div class="rail-slot rh-63"><svg width="46" height="42" viewBox="0 0 46 42"><path d="M1 11h11v30H1z" fill="#e6b94a" stroke="#e8801c"/><path d="M1 11l10-10h6L12 11z" fill="#fff" stroke="#e8801c"/><path d="M13 11h11v30H13z" fill="#3cdc3c" stroke="#1f9a1f"/><path d="M13 11l10-10h6L24 11z" fill="#fff" stroke="#1f9a1f"/><path d="M25 11h11v30H25z" fill="#3ba4f4" stroke="#1f5ec4"/><path d="M25 11L35 1h10L36 11z" fill="#fff" stroke="#1f5ec4"/><path d="M36 11L45 1v30L36 41z" fill="#2c7ce4"/></svg></div>
        <div class="rail-slot rh-66"><svg width="44" height="26" viewBox="0 0 44 26"><path d="M1 18C12 8 32 6 43 20 30 25 12 25 1 18z" fill="#e8e8e8" stroke="#888"/><circle cx="24" cy="14" r="7" fill="#5b8a14"/><circle cx="25" cy="14" r="3" fill="#223"/><path d="M2 17C11 6 30 5 40 16M8 10L5 4M14 7l-2-5M21 6V0M28 6l1-6M34 9l3-5" fill="none" stroke="#333"/></svg></div>
        <div class="rail-slot rh-73"><svg width="44" height="48" viewBox="0 0 44 48"><path d="M2 10L24 2l18 6-20 9z" fill="#f6d838" stroke="#d99a10"/><path d="M2 10v5l20 8v-6zM42 8v5L22 23v-6z" fill="#e8a51c" stroke="#d99a10"/><path d="M15 10l9-3 8 3-9 4z" fill="#fff8b0" stroke="#d33" stroke-dasharray="2 1"/><path d="M2 36l20-9 20 7-20 9z" fill="#f6d838" stroke="#d99a10"/><path d="M2 36v5l20 7v-5zM42 34v5L22 48v-5z" fill="#e8a51c" stroke="#d99a10"/><path d="M16 27l7-3 7 3v4l-7 3-7-3z" fill="#f6c838" stroke="#d99a10"/></svg></div>
        <div class="rail-slot rh-79"><svg width="50" height="50" viewBox="0 0 50 50"><path d="M18 2c14 1 28 13 29 31M18 12c9 1 19 9 21 21" fill="none" stroke="#2e66c8" stroke-width="4.5"/><circle cx="18" cy="34" r="15" fill="#1460d8"/><text x="18" y="41" text-anchor="middle" font-size="20" font-weight="700" font-family="Liberation Serif" fill="#fff">i</text></svg></div>
        <div class="rail-slot rh-78"><svg width="38" height="46" viewBox="0 0 38 46"><path d="M1 1h22l13 13v31H1z" fill="#f4f8ff" stroke="#3a6ad0"/><path d="M23 1v13h13" fill="#dde8fa" stroke="#3a6ad0"/><circle cx="18" cy="28" r="12" fill="#47a2e0"/><path d="M8 24c5-8 11-8 15-6 2 4-3 4-4 8-3 4-6-1-11-2zM18 36c3-2 7-2 9-1-3 3-6 3-9 1zM27 20l3 6-3 1z" fill="#3f8f18"/></svg></div>
        <div class="rail-slot rh-72"><svg width="44" height="44" viewBox="0 0 44 44"><circle cx="22" cy="22" r="21" fill="#8a8a8a"/><circle cx="22" cy="22" r="17" fill="url(#gClock)"/><path d="M22 7v15h14" fill="none" stroke="#223" stroke-width="1.8"/><circle cx="22" cy="22" r="2.4" fill="#111"/><path d="M8 22h3M22 36v-3M12 12l2 2M32 12l-2 2M12 32l2-2M32 32l-2-2" stroke="#334" stroke-width="1.6"/></svg></div>
        <div class="rail-slot rh-66"><svg width="42" height="46" viewBox="0 0 42 46"><ellipse cx="26" cy="43" rx="16" ry="2.5" fill="#ccc"/><path d="M18 7c5-6 13-6 19-2l4 4-4 4-6-4-5 3z" fill="#444" stroke="#111"/><path d="M24 10l-12 18" stroke="#333" stroke-width="5"/><path d="M24 10l-12 18" stroke="#fff" stroke-width="3"/><path d="M3 18l4 5 6-1 15 13 6 7 -5 1-3-4-17-13-7-1z" fill="#9a96b6" stroke="#222"/><path d="M6 42l6-9 5 5-7 6z" fill="#f47a14"/></svg></div>
      </div>

      <div class="nav-pane flex-shrink-0">
        <div class="nav-title">装配导航器</div>
        <div class="nav-head d-flex justify-content-between"><span>描述性部件名</span><span class="nav-head-end">信息</span></div>
        <div class="nav-rows" id="navRows"><span class="nav-line"></span></div>
        <div class="nav-tail"></div>
        <div class="nav-scroll d-flex"><span class="nav-scroll-btn">&lt;</span></div>
        <div class="nav-dbl"></div>
        <div class="nav-fold">预览</div>
        <div class="nav-fold is-last">相关性</div>
        <div class="mosaic-grid" id="mosaicGrid"></div>
      </div>
    </div>

    <!-- dialog window -->
    <div class="dlg-win d-flex flex-column">
      <div class="dlg-title d-flex align-items-center">
        <svg width="14" height="14" viewBox="0 0 14 14"><circle cx="7" cy="7" r="4.4" fill="none" stroke="#fff" stroke-width="2.6"/><path d="M7 0v3M7 11v3M0 7h3M11 7h3M2 2l2 2M10 10l2 2M12 2l-2 2M4 10l-2 2" stroke="#fff" stroke-width="2"/></svg>
        <span class="ms-2 flex-grow-1">视图创建向导</span>
        <svg width="13" height="13" viewBox="0 0 13 13" fill="none" stroke="#fff" stroke-width="1.6"><path d="M3 2.5A5 5 0 1 1 2 7"/><path d="M.8 2.2h3.6v3.4" stroke-width="1.2"/></svg>
        <svg class="ms-2" width="13" height="13" viewBox="0 0 13 13" stroke="#fff" stroke-width="1.8"><path d="M1 1l11 11M12 1L1 12"/></svg>
      </div>
      <div class="dlg-body d-flex">
        <div class="dlg-list flex-shrink-0" id="dlgList">
          <div class="dlg-row d-flex align-items-center"><svg width="30" height="30" viewBox="0 0 30 30"><use href="#sCube" x="2" y="2" width="26" height="26"/></svg>部件</div>
          <div class="dlg-row is-alt d-flex align-items-center"><svg width="30" height="30" viewBox="0 0 30 30"><use href="#sCube" x="3" y="0" width="14" height="14"/><use href="#sCube" x="0" y="13" width="16" height="16"/><use href="#sCube" x="13" y="11" width="17" height="17"/></svg>大型装配</div>
          <div class="dlg-row is-sel d-flex align-items-center"><svg width="30" height="30" viewBox="0 0 30 30"><rect x="3" y="1" width="25" height="28" fill="#eef" stroke="#6a5ae8"/><path d="M6 7l3 3 6-7M6 24l3 3 6-7" fill="none" stroke="#d11" stroke-width="1.6"/><rect x="7" y="14" width="4" height="4" fill="#f2e23c" stroke="#55a" stroke-width=".6"/><path d="M15 10h7M15 16h7M15 25h7" stroke="#777"/></svg>选项</div>
          <div class="dlg-row is-alt d-flex align-items-center"><svg width="30" height="32" viewBox="0 0 30 32"><rect x="1" y="1" width="28" height="13" fill="#fff" stroke="#000"/><circle cx="17" cy="7.5" r="4.8" fill="#fff" stroke="#000"/><path d="M7 27V9" stroke="#11a" stroke-width="1.2"/><path d="M4 10l3-5 3 5z" fill="#11a"/><path d="M7 27l16-8" stroke="#1a9a1a" stroke-width="1.2"/><path d="M20 18l7-2-3 6z" fill="#1a9a1a"/><path d="M7 27l16 5" stroke="#c11" stroke-width="1.2"/><circle cx="7" cy="27" r="2" fill="#c11"/></svg>方向</div>
          <div class="dlg-row d-flex align-items-center"><svg width="30" height="28" viewBox="0 0 30 28"><rect x=".5" y=".5" width="29" height="27" fill="#fff" stroke="#000"/><rect x="1" y="1" width="28" height="4" fill="#ccd4f4"/><path d="M1 5h28M15 5v22M1 16h28" stroke="#006"/><path d="M2 14h7M17 14h7M2 26h7M17 26h7" stroke="#a11" stroke-width="2"/></svg>布局</div>
        </div>
        <div class="dlg-right flex-shrink-0">
          <div class="dlg-top d-flex align-items-center justify-content-between">
            <span>设置视图显示选项</span>
            <svg width="37" height="43" viewBox="0 0 37 43"><rect x="1" y="1" width="35" height="41" fill="url(#gList)" stroke="#6a5ae8"/><rect x="6" y="6" width="6" height="6" fill="#ddd" stroke="#777"/><path d="M6 8l4 4 7-9" fill="none" stroke="#d11" stroke-width="1.7"/><path d="M18 10h12M18 21h10M18 33h13" stroke="#777"/><rect x="7" y="18" width="6" height="6" fill="#f6f03c" stroke="#55a"/><rect x="6" y="30" width="6" height="6" fill="#ddd" stroke="#777"/><path d="M6 32l4 4 7-9" fill="none" stroke="#d11" stroke-width="1.7"/></svg>
          </div>
          <div class="dlg-sec">
            <div class="dlg-sec-head d-flex align-items-center justify-content-between">
              <span>选项</span>
              <svg width="11" height="8" viewBox="0 0 11 8" fill="none" stroke="#00708f" stroke-width="2"><path d="M1 7l4.5-5L10 7"/></svg>
            </div>
            <div class="dlg-inner">
              <div class="opt-row d-flex align-items-center justify-content-between">
                <span>视图边界</span>
                <div class="cb-box d-flex align-items-center"><span class="cb-text">自动</span><span class="cb-arrow is-dark"></span></div>
              </div>
              <div class="opt-row d-flex align-items-center opt-off"><input class="form-check-input opt-check" type="checkbox" checked disabled>自动缩放至适合窗口</div>
              <div class="opt-row d-flex align-items-center justify-content-between opt-off">
                <span>比例</span>
                <div class="cb-box is-off d-flex align-items-center justify-content-between"><span>1:5</span><span class="cb-arrow"></span></div>
              </div>
              <div class="opt-row is-sm d-flex align-items-center"><input class="form-check-input opt-check" type="checkbox" checked>显示轮廓线</div>
              <div class="opt-row is-sm d-flex align-items-center"><input class="form-check-input opt-check" type="checkbox">显示视图标签</div>
              <div class="d-flex align-items-center justify-content-between opt-off">
                <span>设置</span>
                <div class="opt-aa d-flex align-items-center justify-content-center"><svg width="50" height="50" viewBox="0 0 50 50"><text x="13" y="24" text-anchor="middle" font-size="24" font-family="Liberation Sans" fill="#aaa">A</text><text x="31" y="45" text-anchor="middle" font-size="46" font-weight="700" font-style="italic" font-family="Liberation Serif" fill="#aaaac8">A</text><rect x="12" y="47" width="36" height="1" fill="#aaaac8"/></svg></div>
              </div>
            </div>
          </div>
        </div>
      </div>
      <div class="dlg-rule"></div>
      <div class="dlg-foot d-flex justify-content-end">
        <button class="btn dlg-btn" type="button">&lt; 上一步</button>
        <button class="btn dlg-btn" type="button">下一步 &gt;</button>
        <button class="btn dlg-btn is-main" type="button">完成</button>
        <button class="btn dlg-btn" type="button">取消</button>
      </div>
    </div>

    <!-- red annotation boxes -->
    <div class="mark-red mark-a"></div>
    <div class="mark-red mark-b"></div>
    <div class="mark-red mark-c"></div>
    <div class="mark-red mark-d"></div>

    <!-- watermark -->
    <svg class="wm-hex" width="72" height="84" viewBox="0 0 72 84">
      <polygon points="36,0 56,11 52,26 36,17 18,28 0,20" fill="#d6effd"/>
      <polygon points="56,11 72,20 72,52 60,62 56,50 57,28" fill="#92d8fb"/>
      <polygon points="72,52 72,63 36,84 14,72 32,66 54,60" fill="#74c3ec"/>
      <polygon points="0,20 18,28 18,56 14,72 0,63" fill="#bfe6fb"/>
      <polygon points="36,27 49,34 36,41 23,34" fill="#aee1fa"/>
      <polygon points="23,34 36,41 36,57 23,50" fill="#90d4f6"/>
      <polygon points="49,34 36,41 36,57 49,50" fill="#74c3ec"/>
    </svg>
    <div class="wm-big">3D世界网</div>
    <div class="wm-url">WWW.3DSJW.COM</div>
  </div>

  <script>
    // navigator rows behind the mosaic
    const navRows = document.getElementById('navRows');
    for (let i = 0; i < 16; i++) {
      const row = document.createElement('div');
      row.className = 'nav-row' + (i % 2 === 0 ? ' is-alt' : '');
      navRows.appendChild(row);
    }

    // empty rows of the step list
    const dlgList = document.getElementById('dlgList');
    for (let i = 5; i < 18; i++) {
      const row = document.createElement('div');
      row.className = 'dlg-row' + (i % 2 === 1 ? ' is-alt' : '');
      dlgList.appendChild(row);
    }

    // 50px mosaic, '.' leaves the tree visible
    const colors = {
      f: '#fafafa', w: '#fff', k: '#1e1e1e', r: '#cc0000', o: '#ffbd74', c: '#fbf9d9', b: '#000',
      t: '#d9f9f8', u: '#1e71bb', l: '#dcdcf9', d: '#cd2d2c', p: '#764c97', g: '#cccccc', e: '#f0f0f0'
    };
    const mosaic = [
      'ffffffff', 'wwkkkwww', 'fffffff.', 'frffffff', 'wwkowww.',
      'wwwww...', 'fwkcf...', 'wwwwwww.', 'wbwwwwww', 'fwtfuflf',
      'wwwwwww.', 'wdpwowww', '.ggggeee'
    ];
    const mosaicGrid = document.getElementById('mosaicGrid');
    mosaic.forEach(line => {
      [...line].forEach(ch => {
        const cell = document.createElement('div');
        if (ch !== '.') cell.style.background = colors[ch];
        mosaicGrid.appendChild(cell);
      });
    });
  </script>
</body>

</html>
